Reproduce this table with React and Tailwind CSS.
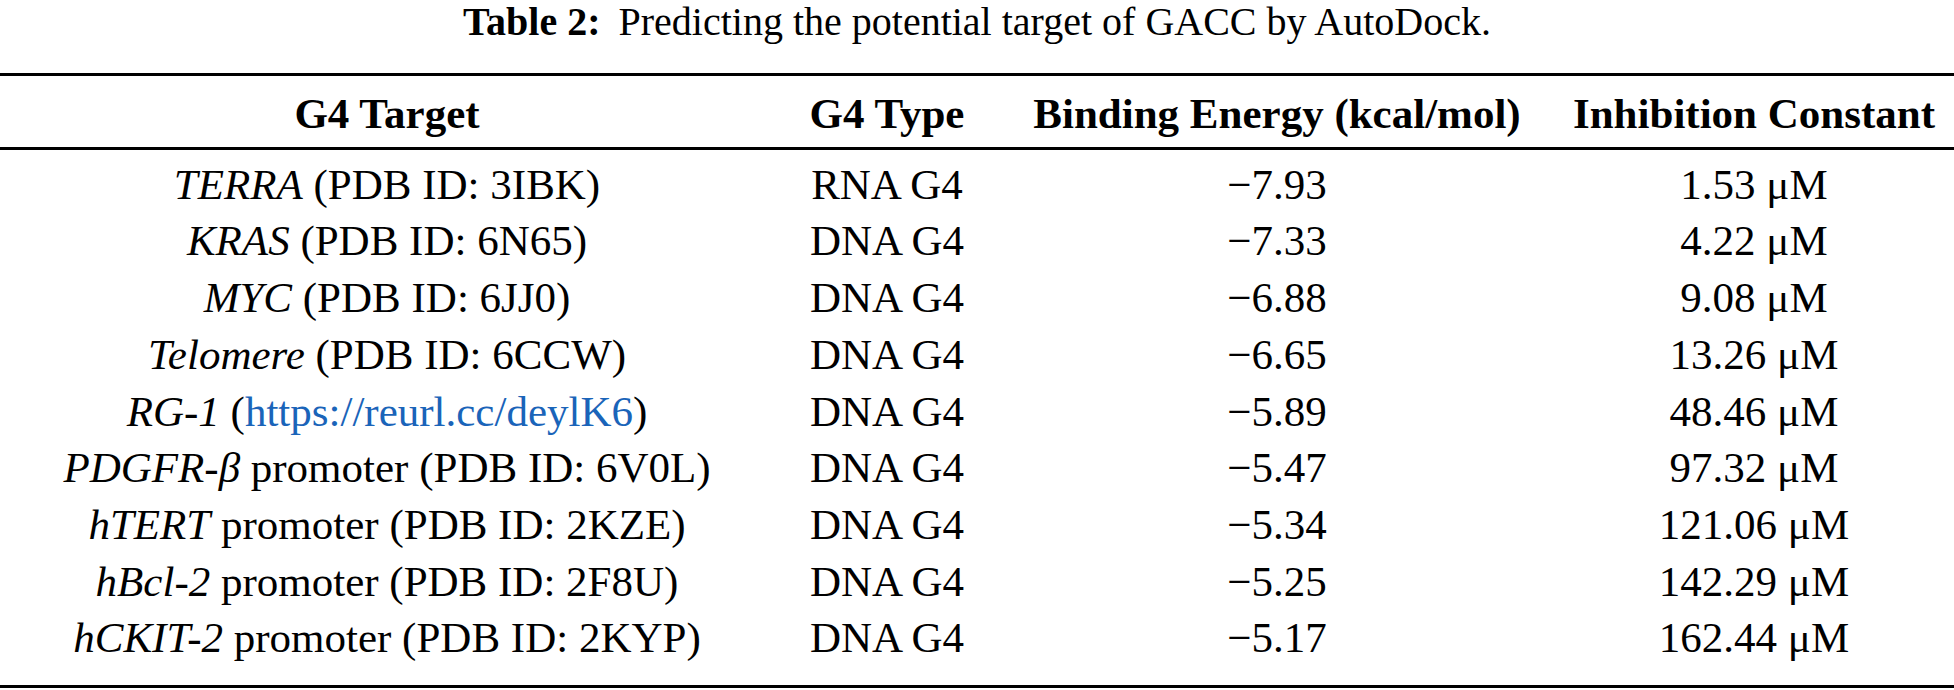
import React from 'react';

const rows = [
    { name: 'TERRA', rest: ' (PDB ID: 3IBK)', type: 'RNA G4', energy: '−7.93', ki: '1.53 μM' },
    { name: 'KRAS', rest: ' (PDB ID: 6N65)', type: 'DNA G4', energy: '−7.33', ki: '4.22 μM' },
    { name: 'MYC', rest: ' (PDB ID: 6JJ0)', type: 'DNA G4', energy: '−6.88', ki: '9.08 μM' },
    { name: 'Telomere', rest: ' (PDB ID: 6CCW)', type: 'DNA G4', energy: '−6.65', ki: '13.26 μM' },
    { name: 'RG-1', link: 'https://reurl.cc/deylK6', type: 'DNA G4', energy: '−5.89', ki: '48.46 μM' },
    { name: 'PDGFR-β', rest: ' promoter (PDB ID: 6V0L)', type: 'DNA G4', energy: '−5.47', ki: '97.32 μM' },
    { name: 'hTERT', rest: ' promoter (PDB ID: 2KZE)', type: 'DNA G4', energy: '−5.34', ki: '121.06 μM' },
    { name: 'hBcl-2', rest: ' promoter (PDB ID: 2F8U)', type: 'DNA G4', energy: '−5.25', ki: '142.29 μM' },
    { name: 'hCKIT-2', rest: ' promoter (PDB ID: 2KYP)', type: 'DNA G4', energy: '−5.17', ki: '162.44 μM' },
];

const cols = 'grid grid-cols-[774px_226px_554px_400px] text-center';

export default function App() {
    return (
        <div className="w-[1954px] h-[690px] bg-white text-black font-['Liberation_Serif',serif] overflow-hidden">
            <p className="text-[40px] leading-[44px] text-center whitespace-nowrap">
                <span className="font-bold">Table 2:</span>
                <span className="ml-[18px]">Predicting the potential target of GACC by AutoDock.</span>
            </p>
            <div className="mt-[29px] border-t-[3px] border-black">
                <div className={`${cols} text-[43px] leading-[56.7px] font-bold pt-[10px] pb-[4px] border-b-[3px] border-black`}>
                    <div>G4 Target</div>
                    <div>G4 Type</div>
                    <div>Binding Energy (kcal/mol)</div>
                    <div>Inhibition Constant</div>
                </div>
                <div className="pt-[7px] pb-[18px] border-b-[3px] border-black">
                    {rows.map((r) => (
                        <div key={r.name} className={`${cols} text-[43px] leading-[56.7px] whitespace-nowrap`}>
                            <div>
                                <i>{r.name}</i>
                                {r.link ? (
                                    <>
                                        {' ('}
                                        <a href={r.link} className="text-[#1a64b9]">{r.link}</a>
                                        {')'}
                                    </>
                                ) : (
                                    r.rest
                                )}
                            </div>
                            <div>{r.type}</div>
                            <div>{r.energy}</div>
                            <div>{r.ki}</div>
                        </div>
                    ))}
                </div>
            </div>
        </div>
    );
}
